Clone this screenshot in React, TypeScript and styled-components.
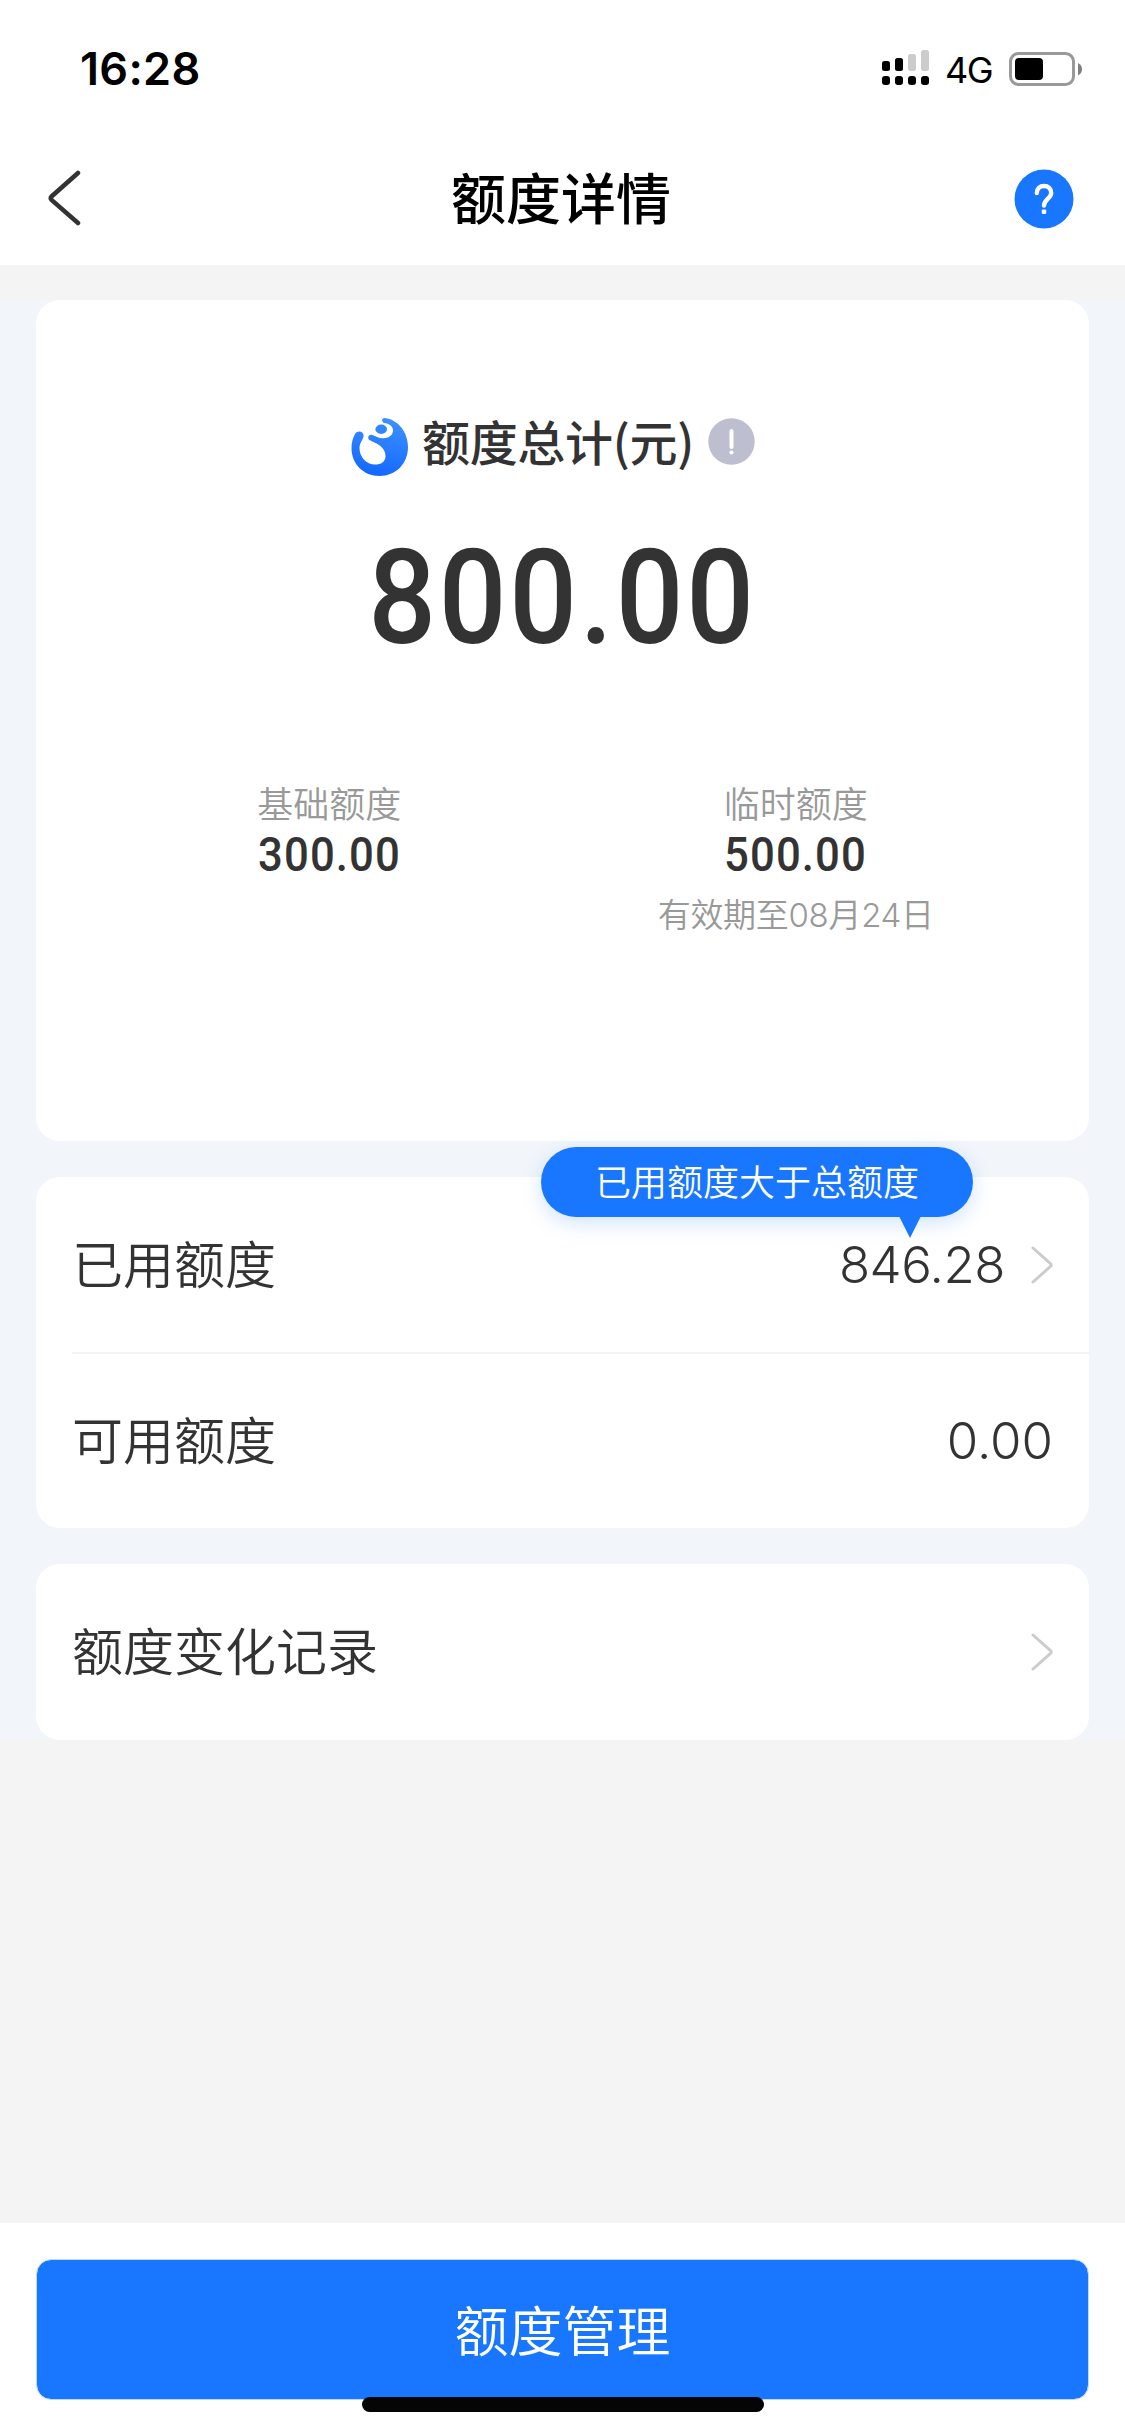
import React from "react";
import styled, { createGlobalStyle } from "styled-components";

const cjk = '"Noto Sans CJK SC", sans-serif';
const latin = 'Inter, "Noto Sans CJK SC", sans-serif';

const GlobalStyle = createGlobalStyle`
  * { box-sizing: border-box; }
  body { margin: 0; background: #f4f4f4; font-family: ${cjk}; color: #333; }
`;

const Screen = styled.div`
  width: 1125px;
  height: 2436px;
  display: flex;
  flex-direction: column;
  background: #f4f4f4;
  overflow: hidden;
`;

const StatusBar = styled.div`
  height: 132px;
  flex: none;
  padding: 0 42px 0 80px;
  display: flex;
  justify-content: space-between;
  align-items: flex-start;
  background: #fff;
  color: #000;
`;

const Clock = styled.span`
  padding-top: 41px;
  font: 600 45px/56px ${latin};
  letter-spacing: 0.3px;
`;

const StatusIcons = styled.div`
  padding-top: 49px;
  display: flex;
  align-items: flex-start;
`;

const Network = styled.span`
  width: 79px;
  padding-left: 15px;
  font: 400 36px/42px ${latin};
  letter-spacing: -1.5px;
`;

const NavBar = styled.header`
  height: 133px;
  flex: none;
  padding: 0 51px 0 48px;
  display: grid;
  grid-template-columns: 60px 1fr 60px;
  align-items: center;
  background: #fff;
`;

const NavTitle = styled.h1`
  margin: 0;
  padding-bottom: 8px;
  text-align: center;
  font: 500 55px/70px ${cjk};
  color: #000;
`;

const Content = styled.main`
  margin-top: 35px;
  padding: 0 36px;
  display: flex;
  flex-direction: column;
  gap: 36px;
  background: #f2f5fa;
`;

const Card = styled.section`
  border-radius: 24px;
  background: #fff;
`;

const SummaryCard = styled(Card)`
  height: 841px;
  padding-top: 112px;
`;

const SummaryTitle = styled.div`
  height: 60px;
  padding-right: 19px;
  display: flex;
  justify-content: center;
  align-items: center;
`;

const SummaryLabel = styled.span`
  margin: 0 14px 0 13px;
  padding-bottom: 5px;
  font: 500 48px/60px ${cjk};
  letter-spacing: -0.3px;
`;

const Total = styled.div`
  height: 150px;
  margin-top: 51px;
  text-align: center;
  font: 500 131px/150px Roboto, sans-serif;
  letter-spacing: 3px;
  transform: scaleX(0.91);
`;

const Breakdown = styled.div`
  margin-top: 104px;
  padding: 0 60px;
  display: grid;
  grid-template-columns: 1fr 1fr;
`;

const Part = styled.div`
  display: flex;
  flex-direction: column;
  align-items: center;
`;

const PartLabel = styled.span`
  font: 350 36px/50px ${cjk};
  color: #999;
`;

const PartValue = styled.span`
  margin-top: 3px;
  font: 500 48px/50px Roboto, sans-serif;
  letter-spacing: 1.2px;
  transform: scaleX(0.91);
`;

const PartNote = styled.span`
  margin-top: 10px;
  font: 350 33px/50px ${latin};
  letter-spacing: -0.3px;
  color: #999;
`;

const Row = styled.div<{ $divided?: boolean }>`
  position: relative;
  height: ${(p) => (p.$divided ? 177 : 174)}px;
  margin-left: 36px;
  padding-right: 36px;
  display: flex;
  align-items: center;
  border-bottom: ${(p) => (p.$divided ? "2px solid #f3f3f3" : "0")};
`;

const SingleRow = styled(Row)`
  height: 176px;
`;

const RowLabel = styled.span`
  flex: 1;
  padding-bottom: 6px;
  font: 350 51px/70px ${cjk};
`;

const RowValue = styled.span<{ $spacing: number }>`
  font: 350 51px/70px ${latin};
  letter-spacing: ${(p) => p.$spacing}px;
`;

const Tip = styled.div`
  position: absolute;
  top: -30px;
  right: 116px;
  width: 432px;
  height: 70px;
  border-radius: 35px;
  background: #1876ff;
  box-shadow: 0 6px 20px rgba(24, 118, 255, 0.2);
  color: #fff;
  text-align: center;
  font: 350 36px/67px ${cjk};

  &::after {
    content: "";
    position: absolute;
    right: 52px;
    top: 69px;
    border: solid transparent;
    border-width: 22px 11px 0;
    border-top-color: #1876ff;
  }
`;

const Footer = styled.footer`
  position: relative;
  height: 213px;
  flex: none;
  margin-top: auto;
  padding: 36px;
  background: #fff;
`;

const PrimaryButton = styled.button`
  display: block;
  width: 100%;
  height: 141px;
  padding: 0 0 1px;
  border: 1px solid #bcd8ff;
  border-radius: 15px;
  background: #1876ff;
  background-clip: padding-box;
  color: #fff;
  font: 350 54px/136px ${cjk};
`;

const HomeIndicator = styled.div`
  position: absolute;
  left: 362px;
  bottom: 24px;
  width: 402px;
  height: 15px;
  border-radius: 8px;
  background: #050505;
`;

const RowChevron = styled.svg<{ $gap?: boolean }>`
  display: block;
  margin-left: ${(p) => (p.$gap ? 25 : 0)}px;
`;

function Chevron({ gap }: { gap?: boolean }) {
  return (
    <RowChevron $gap={gap} width="23" height="40" viewBox="0 0 23 40" fill="none">
      <path d="M3 3 20.5 18.6q1.4 1.4 0 2.8L3 37" stroke="#ccc" strokeWidth="3" strokeLinecap="round" />
    </RowChevron>
  );
}

const Signal = () => (
  <svg width="48" height="38" viewBox="0 0 48 38">
    {[12, 9, 5, 1].map((top, i) => (
      <g key={top}>
        <rect x={i * 13} y={top} width="8" height={22 - top} rx="2.5" fill={i < 2 ? "#000" : "#ccc"} />
        <rect x={i * 13} y="27" width="8" height="9" rx="3" />
      </g>
    ))}
  </svg>
);

const Battery = () => (
  <svg width="74" height="40" viewBox="0 0 74 40">
    <rect x="1.5" y="4.5" width="63" height="31" rx="8" fill="none" stroke="#999" strokeWidth="3" />
    <rect x="6" y="9" width="28" height="22" rx="4" />
    <path d="M69 14q4 2 4 6.200t-4 6.200z" fill="#808080" />
  </svg>
);

const Back = () => (
  <svg width="34" height="60" viewBox="0 0 34 60" fill="none">
    <path d="M30 4 3.800 27.200q-2 2 0 4L30 54" stroke="#333" strokeWidth="4.500" strokeLinecap="round" />
  </svg>
);

const Help = () => (
  <svg width="60" height="60" viewBox="0 0 60 60" fill="none">
    <circle cx="30" cy="30" r="29.500" fill="#1876ff" />
    <path d="M22.800 24c0-4.500 3-7 7.200-7s7.200 2.600 7.200 7c0 5.500-7.200 6.500-7.200 12.500" stroke="#fff" strokeWidth="4.400" strokeLinecap="round" />
    <rect x="27.800" y="40.500" width="4.400" height="4.400" rx="1" fill="#fff" />
  </svg>
);

const LogoMark = styled.svg`
  position: relative;
  top: 5px;
`;

const Logo = () => (
  <LogoMark width="58" height="60" viewBox="0 0 58 60">
    <defs>
      <linearGradient id="logo" x1="0.6" y1="0" x2="0.4" y2="1">
        <stop offset="0" stopColor="#3d90ff" />
        <stop offset="1" stopColor="#1268ff" />
      </linearGradient>
    </defs>
    <path
      fill="url(#logo)"
      d="M34 1C46 2.500 57 14 57 30 57 47 44.500 59 28.500 59S.5 47 .5 31c0-5 1.200-10 3.500-14 2.500-4.200 8.800-3 8.600 2-.2 3.500-4.100 6.500-4.100 12C8.500 40 15.500 47.500 24 47.500c6 0 10.500-2.500 10.500-8.500 0-5-3-8.500-6.500-11-3-2.200-6.500-3-9.500-5-2.800-2.200-.8-6 2.800-5.100 3.500 1.200 6 3.300 10.700 3.300 6 0 10-3.200 10-7.700 0-4.200-3.700-6.600-7.500-7.200-4.400-.6-4.400-5.500-.5-5.300Z"
    />
    <ellipse cx="30.200" cy="12.300" rx="5.800" ry="4.700" fill="#2f86ff" />
  </LogoMark>
);

const Info = () => (
  <svg width="47" height="60" viewBox="0 0 47 60">
    <circle cx="23.500" cy="29.500" r="23.200" fill="#bdbed0" />
    <rect x="21.500" y="17" width="4" height="20" rx="2" fill="#fff" />
    <circle cx="23.500" cy="40.500" r="2.100" fill="#fff" />
  </svg>
);

export default function App() {
  return (
    <Screen>
      <GlobalStyle />
      <StatusBar>
        <Clock>16:28</Clock>
        <StatusIcons>
          <Signal />
          <Network>4G</Network>
          <Battery />
        </StatusIcons>
      </StatusBar>
      <NavBar>
        <Back />
        <NavTitle>额度详情</NavTitle>
        <Help />
      </NavBar>
      <Content>
        <SummaryCard>
          <SummaryTitle>
            <Logo />
            <SummaryLabel>额度总计(元)</SummaryLabel>
            <Info />
          </SummaryTitle>
          <Total>800.00</Total>
          <Breakdown>
            <Part>
              <PartLabel>基础额度</PartLabel>
              <PartValue>300.00</PartValue>
            </Part>
            <Part>
              <PartLabel>临时额度</PartLabel>
              <PartValue>500.00</PartValue>
              <PartNote>有效期至08月24日</PartNote>
            </Part>
          </Breakdown>
        </SummaryCard>
        <Card>
          <Row $divided>
            <RowLabel>已用额度</RowLabel>
            <RowValue $spacing={-0.5}>846.28</RowValue>
            <Chevron gap />
            <Tip>已用额度大于总额度</Tip>
          </Row>
          <Row>
            <RowLabel>可用额度</RowLabel>
            <RowValue $spacing={0}>0.00</RowValue>
          </Row>
        </Card>
        <Card>
          <SingleRow>
            <RowLabel>额度变化记录</RowLabel>
            <Chevron />
          </SingleRow>
        </Card>
      </Content>
      <Footer>
        <PrimaryButton>额度管理</PrimaryButton>
        <HomeIndicator />
      </Footer>
    </Screen>
  );
}
